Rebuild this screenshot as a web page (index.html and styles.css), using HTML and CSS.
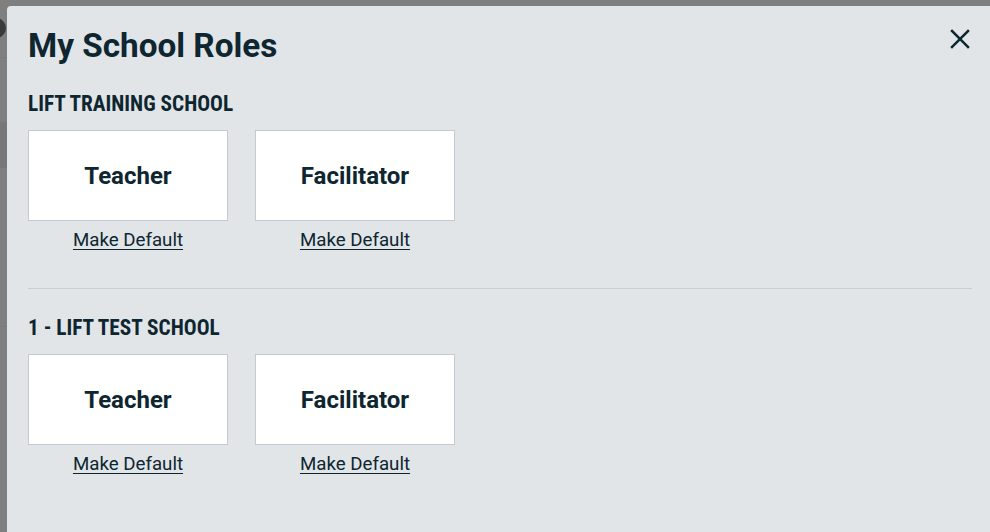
FILE: index.html
```html
<!DOCTYPE html>
<html lang="en">
<head>
    <meta charset="UTF-8">
    <meta name="viewport" content="width=device-width, initial-scale=1.0">
    <title>My School Roles</title>
    <link rel="stylesheet" href="styles.css">
</head>
<body>
    <!-- page underneath the dialog -->
    <div class="page">
        <div class="page-header">
            <span class="page-avatar"></span>
        </div>
        <div class="page-band"></div>
        <div class="page-rule"></div>
    </div>

    <div class="overlay"></div>

    <div class="modal" role="dialog" aria-labelledby="modalTitle">
        <div class="modal-header">
            <h1 id="modalTitle">My School Roles</h1>
            <button class="close-btn" aria-label="Close">
                <svg width="24" height="24" viewBox="0 0 24 24" fill="none" stroke="currentColor" stroke-width="2.5" stroke-linecap="square">
                    <line x1="4" y1="4" x2="20" y2="20"/>
                    <line x1="20" y1="4" x2="4" y2="20"/>
                </svg>
            </button>
        </div>

        <section class="school">
            <h2 class="school-name">LIFT TRAINING SCHOOL</h2>
            <div class="roles">
                <div class="role">
                    <div class="role-card">Teacher</div>
                    <a href="#" class="make-default">Make Default</a>
                </div>
                <div class="role">
                    <div class="role-card">Facilitator</div>
                    <a href="#" class="make-default">Make Default</a>
                </div>
            </div>
        </section>

        <section class="school">
            <h2 class="school-name">1 - LIFT TEST SCHOOL</h2>
            <div class="roles">
                <div class="role">
                    <div class="role-card">Teacher</div>
                    <a href="#" class="make-default">Make Default</a>
                </div>
                <div class="role">
                    <div class="role-card">Facilitator</div>
                    <a href="#" class="make-default">Make Default</a>
                </div>
            </div>
        </section>
    </div>
</body>
</html>
```

FILE: styles.css
```css
:root {
    --text-color: #0e2630;
    --modal-bg: #e1e5e8;
    --card-border: #c3cad3;
    --rule-color: #cbcfd2;
}

* {
    box-sizing: border-box;
}

html,
body {
    height: 100%;
}

body {
    margin: 0;
    font-family: Roboto, 'Noto Sans', sans-serif;
    color: var(--text-color);
    background-color: #ffffff;
    overflow: hidden;
}

.page {
    height: 100%;
}

.page-header {
    height: 58px;
    padding-top: 18px;
    border-bottom: 1px solid #f4f4f4;
}

.page-avatar {
    display: block;
    width: 20px;
    height: 20px;
    margin-left: -14px;
    border-radius: 50%;
    background-color: #747474;
}

.page-band {
    height: 46px;
    margin-top: 64px;
    background-color: #f0f0f0;
}

.page-rule {
    margin-top: 158px;
    border-top: 1px solid #f4f4f4;
}

.overlay {
    position: fixed;
    inset: 0;
    background-color: rgba(0, 0, 0, 0.5);
}

.modal {
    position: fixed;
    top: 6px;
    left: 7px;
    right: 0;
    bottom: 0;
    padding: 20px 18px 0 21px;
    background-color: var(--modal-bg);
    border-top-left-radius: 4px;
}

.modal-header {
    display: flex;
    justify-content: space-between;
    align-items: flex-start;
}

.modal-header h1 {
    margin: 0;
    font-size: 33.3px;
    line-height: 39px;
    font-weight: 700;
}

.close-btn {
    margin-top: 1px;
    padding: 0;
    border: none;
    background: none;
    color: var(--text-color);
    cursor: pointer;
}

.close-btn svg {
    display: block;
}

.school {
    padding: 27px 0 37px;
}

.school + .school {
    border-top: 1px solid var(--rule-color);
}

.school-name {
    margin: 0;
    font-family: 'Roboto Condensed', Roboto, sans-serif;
    font-size: 21.3px;
    line-height: 24px;
    font-weight: 700;
}

.roles {
    display: flex;
    gap: 27px;
    margin-top: 14px;
}

.role {
    width: 200px;
    display: flex;
    flex-direction: column;
    align-items: center;
}

.role-card {
    width: 200px;
    height: 91px;
    display: flex;
    justify-content: center;
    align-items: center;
    background-color: #ffffff;
    border: 1px solid var(--card-border);
    font-size: 24px;
    font-weight: 700;
}

.make-default {
    margin-top: 8px;
    font-size: 18.7px;
    line-height: 22px;
    color: var(--text-color);
    text-decoration: underline;
    text-underline-offset: 3px;
}
```
